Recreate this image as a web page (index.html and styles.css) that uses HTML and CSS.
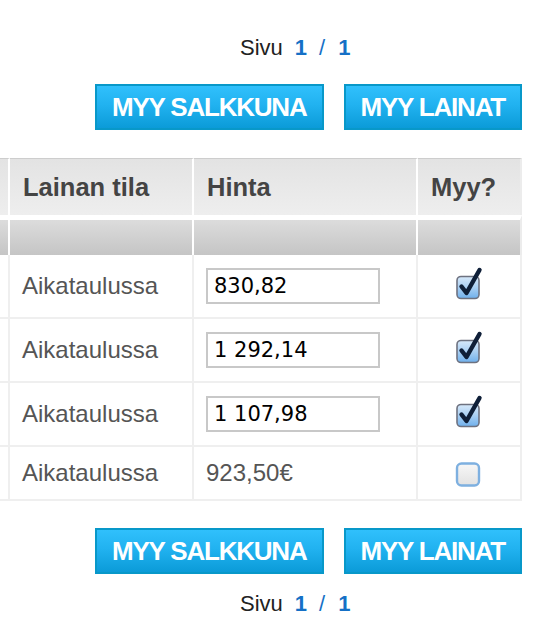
FILE: index.html
```html
<!DOCTYPE html>
<html lang="fi">
<head>
<meta charset="utf-8">
<title>Myy lainat</title>
<link rel="stylesheet" href="styles.css">
</head>
<body>
<div class="page">
  <div class="pager pager-top">Sivu <span class="num">1</span><span class="sep">/</span><span class="num">1</span></div>
  <div class="actions">
    <button class="btn" type="button">MYY SALKKUNA</button>
    <button class="btn" type="button">MYY LAINAT</button>
  </div>

  <table class="loans">
    <colgroup>
      <col class="c-cut"><col class="c-state"><col class="c-price"><col class="c-sell">
    </colgroup>
    <thead>
      <tr class="head">
        <th></th><th>Lainan tila</th><th>Hinta</th><th>Myy?</th>
      </tr>
      <tr class="band">
        <td></td><td></td><td></td><td></td>
      </tr>
    </thead>
    <tbody>
      <tr>
        <td></td><td>Aikataulussa</td>
        <td><input class="price" type="text" value="830,82"></td>
        <td class="center"><span class="cb checked"><svg viewBox="0 0 30 34" width="30" height="34"><defs><linearGradient id="g1" x1="0" y1="0" x2="0" y2="1"><stop offset="0" stop-color="#d7e9fa"/><stop offset="0.5" stop-color="#a9cff3"/><stop offset="1" stop-color="#6fb0ec"/></linearGradient></defs><rect x="3" y="10.5" width="22" height="22" rx="4" fill="url(#g1)" stroke="#6e7280" stroke-width="1.6"/><path d="M7.5 20.5 L12.5 27 L25.5 4" fill="none" stroke="#0f1f38" stroke-width="4.4" stroke-linecap="round" stroke-linejoin="round"/></svg></span></td>
      </tr>
      <tr>
        <td></td><td>Aikataulussa</td>
        <td><input class="price" type="text" value="1 292,14"></td>
        <td class="center"><span class="cb checked"><svg viewBox="0 0 30 34" width="30" height="34"><rect x="3" y="10.5" width="22" height="22" rx="4" fill="url(#g1)" stroke="#6e7280" stroke-width="1.6"/><path d="M7.5 20.5 L12.5 27 L25.5 4" fill="none" stroke="#0f1f38" stroke-width="4.4" stroke-linecap="round" stroke-linejoin="round"/></svg></span></td>
      </tr>
      <tr>
        <td></td><td>Aikataulussa</td>
        <td><input class="price" type="text" value="1 107,98"></td>
        <td class="center"><span class="cb checked"><svg viewBox="0 0 30 34" width="30" height="34"><rect x="3" y="10.5" width="22" height="22" rx="4" fill="url(#g1)" stroke="#6e7280" stroke-width="1.6"/><path d="M7.5 20.5 L12.5 27 L25.5 4" fill="none" stroke="#0f1f38" stroke-width="4.4" stroke-linecap="round" stroke-linejoin="round"/></svg></span></td>
      </tr>
      <tr class="last">
        <td></td><td>Aikataulussa</td>
        <td>923,50€</td>
        <td class="center"><span class="cb"><svg viewBox="0 0 30 34" width="30" height="34"><defs><linearGradient id="g2" x1="0" y1="0" x2="0" y2="1"><stop offset="0" stop-color="#f7f7f7"/><stop offset="1" stop-color="#e2e2e2"/></linearGradient></defs><rect x="3" y="10.5" width="22" height="22" rx="4.5" fill="url(#g2)" stroke="#7eb0e0" stroke-width="2.4"/></svg></span></td>
      </tr>
    </tbody>
  </table>

  <div class="actions actions-bottom">
    <button class="btn" type="button">MYY SALKKUNA</button>
    <button class="btn" type="button">MYY LAINAT</button>
  </div>
  <div class="pager pager-bottom">Sivu <span class="num">1</span><span class="sep">/</span><span class="num">1</span></div>
</div>
</body>
</html>
```

FILE: styles.css
```css
html, body {
  margin: 0;
  padding: 0;
  background: #fff;
}
body {
  font-family: "Liberation Sans", Arial, sans-serif;
  color: #555;
}
.page {
  width: 538px;
}
.pager {
  font-size: 22px;
  line-height: 26px;
  color: #222;
  padding-left: 240px;
  display: flex;
  align-items: baseline;
}
.pager-top {
  padding-top: 35px;
}
.pager .num {
  color: #1570c6;
  font-weight: bold;
  margin-left: 12px;
}
.pager .sep {
  color: #1570c6;
  margin-left: 12px;
  margin-right: 1px;
}
.pager-bottom {
  margin-top: 17px;
}
.actions {
  display: flex;
  justify-content: flex-end;
  gap: 20px;
  padding-right: 16px;
  margin-top: 23px;
}
.actions-bottom {
  margin-top: 27px;
}
.btn {
  height: 46px;
  padding: 0 15px;
  border: 2px solid #0898c9;
  background: linear-gradient(to bottom, #30c0fc 0%, #21b2f0 45%, #0b9bd8 100%);
  color: #fff;
  font-family: "Liberation Sans", Arial, sans-serif;
  font-weight: bold;
  font-size: 26px;
  letter-spacing: -1.2px;
  cursor: pointer;
}
.loans {
  margin-top: 28px;
  border-collapse: separate;
  border-spacing: 0;
  table-layout: fixed;
  width: 522px;
}
.c-cut { width: 10px; }
.c-state { width: 184px; }
.c-price { width: 224px; }
.c-sell { width: 104px; }
.loans th, .loans td {
  box-sizing: border-box;
  padding: 0 12px;
  text-align: left;
}
.loans th {
  padding: 0 13px;
}
.loans .center {
  text-align: center;
  padding: 0;
}
.loans tr > :first-child {
  padding: 0;
}
.head th {
  height: 57px;
  border-top: 1px solid #cdcdcd;
  border-right: 2px solid #fff;
  background: linear-gradient(to bottom, #e3e3e3 0%, #eeeeee 100%);
  font-size: 25.5px;
  font-weight: bold;
  color: #444;
}
.head th:last-child {
  border-right: 2px solid #ececec;
}
.band td {
  height: 40px;
  border-top: 5px solid #fff;
  border-right: 2px solid #fff;
  background: linear-gradient(to bottom, #dcdcdc 0%, #c5c5c5 100%);
}
.band td:last-child {
  border-right: 2px solid #ececec;
}
tbody td {
  height: 64px;
  border-right: 2px solid #efefef;
  border-bottom: 2px solid #efefef;
  font-size: 24px;
  color: #555;
}
tbody tr.last td {
  height: 54px;
}
.price {
  box-sizing: border-box;
  width: 174px;
  height: 36px;
  margin: 0;
  padding: 0 6px;
  border: 2px solid #c8c8c8;
  font-family: "DejaVu Sans", sans-serif;
  font-size: 21px;
  color: #000;
  vertical-align: middle;
}
.cb {
  display: inline-block;
  width: 30px;
  height: 34px;
  vertical-align: middle;
  margin-top: -8px;
}
.cb svg {
  display: block;
}
```
